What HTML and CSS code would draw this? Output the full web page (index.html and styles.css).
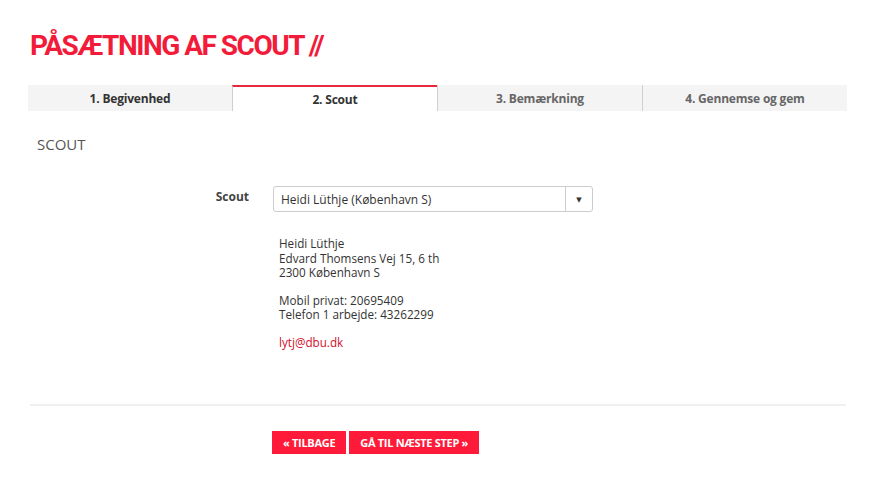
FILE: index.html
```html
<!DOCTYPE html>
<html lang="da">
<head>
<meta charset="utf-8">
<link rel="stylesheet" href="styles.css">
</head>
<body>
<div class="page">
  <h1 class="title">PÅSÆTNING AF SCOUT //</h1>
  <div class="tabs">
    <div class="tab">1. Begivenhed</div>
    <div class="tab active">2. Scout</div>
    <div class="tab muted">3. Bemærkning</div>
    <div class="tab muted">4. Gennemse og gem</div>
  </div>
  <h2 class="section">SCOUT</h2>
  <div class="form-row">
    <div class="label">Scout</div>
    <div class="field">
      <div class="select">
        <span class="select-text">Heidi Lüthje (København S)</span>
        <span class="select-arrow">▼</span>
      </div>
      <div class="info">
        <p>Heidi Lüthje<br>Edvard Thomsens Vej 15, 6 th<br>2300 København S</p>
        <p>Mobil privat: 20695409<br>Telefon 1 arbejde: 43262299</p>
        <p><a class="mail" href="#">lytj@dbu.dk</a></p>
      </div>
    </div>
  </div>
  <div class="divider"></div>
  <div class="buttons">
    <button class="btn">« TILBAGE</button>
    <button class="btn">GÅ TIL NÆSTE STEP »</button>
  </div>
</div>
</body>
</html>
```

FILE: styles.css
```css
html, body {
  margin: 0;
  padding: 0;
  background: #fff;
}
body {
  font-family: "Open Sans", "Noto Sans", "DejaVu Sans", sans-serif;
  color: #333;
}
.page {
  padding: 0 25px 0 28px;
}
.title {
  margin: 0;
  height: 85px;
  padding: 30px 0 0 2px;
  box-sizing: border-box;
  font-family: Roboto, "Open Sans", sans-serif;
  font-size: 28px;
  line-height: 32px;
  font-weight: 700;
  color: #f21c3a;
  letter-spacing: -1.5px;
}
.tabs {
  display: flex;
}
.tab {
  flex: 1;
  height: 26px;
  box-sizing: border-box;
  background: #f4f4f4;
  border-left: 1px solid #cfcfcf;
  text-align: center;
  font-size: 12px;
  font-weight: 700;
  line-height: 27px;
  color: #333;
  letter-spacing: -0.2px;
}
.tab:first-child {
  border-left: none;
}
.tab.active {
  background: #fff;
  border-top: 2px solid #e8283c;
  line-height: 25px;
}
.tab.muted {
  color: #666;
}
.section {
  margin: 0;
  padding: 24px 0 0 9px;
  height: 75px;
  box-sizing: border-box;
  font-size: 15px;
  font-weight: 400;
  color: #555;
  line-height: 18px;
}
.form-row {
  display: flex;
  align-items: flex-start;
}
.label {
  width: 221px;
  text-align: right;
  font-size: 12px;
  font-weight: 700;
  color: #444;
  padding-top: 4px;
  line-height: 14px;
}
.field {
  margin-left: 24px;
}
.select {
  width: 320px;
  height: 26px;
  box-sizing: border-box;
  border: 1px solid #cccccc;
  border-radius: 3px;
  display: flex;
  align-items: center;
  font-size: 12px;
  color: #333;
}
.select-text {
  flex: 1;
  padding-left: 7px;
}
.select-arrow {
  width: 26px;
  height: 100%;
  border-left: 1px solid #ccc;
  display: flex;
  align-items: center;
  justify-content: center;
  font-size: 7px;
  color: #333;
}
.info {
  padding: 24px 0 0 6px;
  font-size: 11.7px;
  line-height: 14.5px;
  color: #333;
}
.info p {
  margin: 0 0 13px 0;
}
.mail {
  color: #d0102c;
  text-decoration: none;
}
.divider {
  margin: 42px 1px 0 2px;
  height: 2px;
  background: #f0f0f0;
}
.buttons {
  display: flex;
  gap: 3px;
  padding: 25px 0 0 244px;
}
.btn {
  height: 23px;
  border: none;
  background: #ff1a3a;
  color: #fff;
  font-family: "Open Sans", "Noto Sans", sans-serif;
  font-weight: 700;
  font-size: 11px;
  padding: 0 11px;
  letter-spacing: -0.3px;
  cursor: pointer;
}
```
